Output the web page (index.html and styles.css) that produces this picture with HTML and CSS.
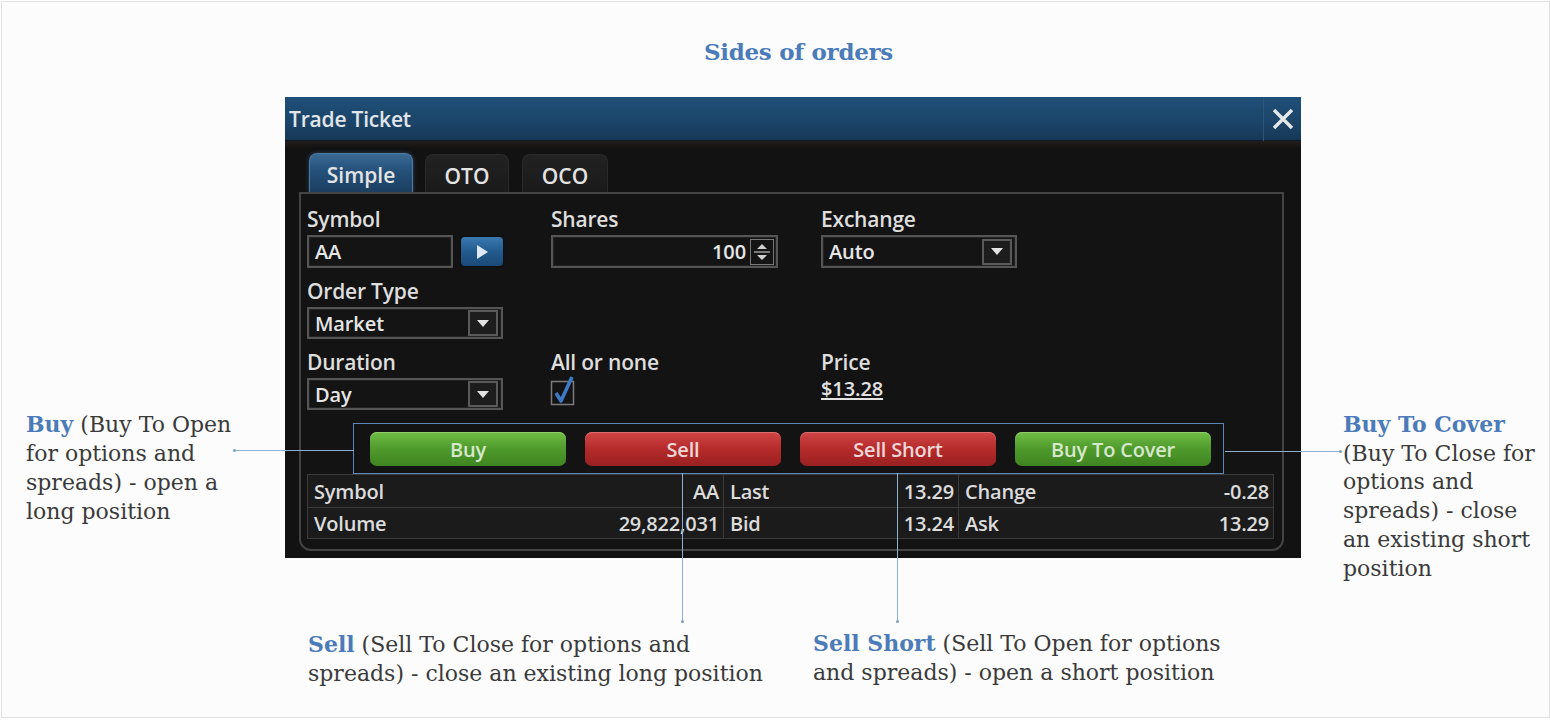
FILE: index.html
```html
<!DOCTYPE html>
<html>
<head>
<meta charset="utf-8">
<link rel="stylesheet" href="styles.css">
</head>
<body>
<div class="canvas">
  <h1 class="heading">Sides of orders</h1>

  <div class="window">
    <div class="titlebar">
      <span class="title">Trade Ticket</span>
      <div class="close">
        <svg width="24" height="24" viewBox="0 0 24 24"><path d="M3 3 L21 21 M21 3 L3 21" stroke="#e6e6e6" stroke-width="3.4" fill="none"/></svg>
      </div>
    </div>
    <div class="strip"></div>
    <div class="tabs">
      <div class="tab active">Simple</div>
      <div class="tab t-oto">OTO</div>
      <div class="tab t-oco">OCO</div>
    </div>
    <div class="panel">
      <div class="form">
        <div class="col c1">
          <div class="label">Symbol</div>
          <div class="ctrl-row">
            <div class="input w-sym">AA</div>
            <div class="go"><svg width="14" height="16" viewBox="0 0 14 16"><path d="M2 1 L13 8 L2 15 Z" fill="#dfe9f5"/></svg></div>
          </div>
          <div class="label">Order Type</div>
          <div class="select w-sel"><span>Market</span><div class="dd"><svg width="14" height="9" viewBox="0 0 14 9"><path d="M1 1 L13 1 L7 8 Z" fill="#e4e4e4"/></svg></div></div>
          <div class="label">Duration</div>
          <div class="select w-sel"><span>Day</span><div class="dd"><svg width="14" height="9" viewBox="0 0 14 9"><path d="M1 1 L13 1 L7 8 Z" fill="#e4e4e4"/></svg></div></div>
        </div>
        <div class="col c2">
          <div class="label">Shares</div>
          <div class="input w-shares num"><span>100</span>
            <div class="spin"><svg width="20" height="22" viewBox="0 0 20 22"><path d="M10 3 L15 8 L5 8 Z M10 19 L15 14 L5 14 Z" fill="#cfcfcf"/><path d="M2 11 L18 11" stroke="#bdbdbd" stroke-width="1.2"/></svg></div>
          </div>
          <div class="spacer"></div>
          <div class="label tight">All or none</div>
          <div class="check"><svg width="30" height="34" viewBox="0 0 30 34"><rect x="1.5" y="7.5" width="22" height="23" fill="none" stroke="#7b7b7b" stroke-width="1.5"/><path d="M6 19 L11 27 L22 3" stroke="#3d79c4" stroke-width="3.6" fill="none" stroke-linejoin="round"/></svg></div>
        </div>
        <div class="col c3">
          <div class="label">Exchange</div>
          <div class="select w-ex"><span>Auto</span><div class="dd"><svg width="14" height="9" viewBox="0 0 14 9"><path d="M1 1 L13 1 L7 8 Z" fill="#e4e4e4"/></svg></div></div>
          <div class="spacer"></div>
          <div class="label tight">Price</div>
          <div class="price">$13.28</div>
        </div>
      </div>

      <div class="actions">
        <div class="btn green">Buy</div>
        <div class="btn red">Sell</div>
        <div class="btn red">Sell Short</div>
        <div class="btn green">Buy To Cover</div>
      </div>

      <div class="quote">
        <div class="qrow">
          <div class="pair p1"><span>Symbol</span><span>AA</span></div>
          <div class="pair p2"><span>Last</span><span>13.29</span></div>
          <div class="pair p3"><span>Change</span><span>-0.28</span></div>
        </div>
        <div class="qrow">
          <div class="pair p1"><span>Volume</span><span>29,822,031</span></div>
          <div class="pair p2"><span>Bid</span><span>13.24</span></div>
          <div class="pair p3"><span>Ask</span><span>13.29</span></div>
        </div>
      </div>
    </div>
  </div>

  <div class="line h-left"><i class="dot dl"></i></div>
  <div class="line h-right"><i class="dot dr"></i></div>
  <div class="line v-sell"><i class="dot db"></i></div>
  <div class="line v-short"><i class="dot db"></i></div>

  <p class="note n-buy"><b>Buy</b> (Buy To Open<br>for options and<br>spreads) - open a<br>long position</p>
  <p class="note n-cover"><b>Buy To Cover</b><br>(Buy To Close for<br>options and<br>spreads) - close<br>an existing short<br>position</p>
  <p class="note n-sell"><b>Sell</b> (Sell To Close for options and<br>spreads) - close an existing long position</p>
  <p class="note n-short"><b>Sell Short</b> (Sell To Open for options<br>and spreads) - open a short position</p>
</div>
</body>
</html>
```
FILE: styles.css
```css
* { box-sizing: border-box; }
html, body { margin: 0; padding: 0; background: #ffffff; }
.canvas {
  position: relative;
  width: 1549px;
  height: 717px;
  margin: 1px 0 0 1px;
  border: 1px solid #e2e2e2;
  background: #fcfcfc;
  overflow: hidden;
}
.heading {
  margin: 0;
  padding: 35px 0 0 46px;
  height: 65px;
  line-height: 30px;
  text-align: center;
  font-family: "DejaVu Serif", serif;
  font-weight: bold;
  font-size: 23px;
  color: #4b7bb8;
  letter-spacing: -0.3px;
}
.window {
  margin: 30px 0 0 283px;
  width: 1016px;
  height: 461px;
  background: #121212;
  display: flex;
  flex-direction: column;
  font-family: "Open Sans", "Noto Sans", sans-serif;
  color: #dcdcdc;
}
.titlebar {
  height: 44px;
  display: flex;
  align-items: center;
  background: linear-gradient(#1f4f78, #1b4468 60%, #163857);
  border-bottom: 1px solid #0c1b29;
}
.title {
  flex: 1;
  padding-left: 4px;
  font-size: 21px;
  font-weight: 600;
  color: #e2e6ea;
  letter-spacing: -0.2px;
}
.close {
  width: 38px;
  height: 44px;
  border-left: 1px solid #2e5576;
  display: flex;
  align-items: center;
  justify-content: center;
}
.strip { height: 6px; background: linear-gradient(#241d1b, #161414); }
.tabs {
  margin-top: 6px;
  padding-left: 24px;
  display: flex;
  height: 39px;
  align-items: flex-end;
}
.tab {
  height: 38px;
  width: 84px;
  margin-right: 13px;
  border-radius: 8px 8px 0 0;
  background: linear-gradient(#222, #1a1a1a);
  border: 1px solid #2a2a2a;
  border-bottom: none;
  font-size: 21px;
  font-weight: 600;
  color: #e4e4e4;
  display: flex;
  align-items: center;
  justify-content: center;
  padding-top: 4px;
  letter-spacing: 0;
}
.tab.active {
  width: 104px;
  height: 39px;
  margin-right: 12px;
  background: linear-gradient(#3a6a94, #24507a 45%, #1c3f60);
  border: 1px solid #4d7aa3;
  border-bottom: none;
  box-shadow: 0 0 4px rgba(70,120,170,0.5);
}
.tab.t-oco { width: 86px; }
.panel {
  margin: 0 17px 7px 14px;
  flex: 1;
  border: 2px solid #444;
  border-radius: 0 0 12px 12px;
  padding: 13px 8px 0 6px;
  background: #131313;
}
.form { display: flex; }
.col { display: flex; flex-direction: column; align-items: flex-start; }
.c1 { width: 244px; }
.c2 { width: 270px; }
.c3 { flex: 1; }
.label {
  height: 24px;
  line-height: 24px;
  font-size: 21px;
  font-weight: 600;
  color: #dedede;
  letter-spacing: -0.2px;
  margin-bottom: 4px;
  white-space: nowrap;
}
.label.tight { margin-bottom: 0; }
.ctrl-row { display: flex; align-items: center; gap: 8px; margin-bottom: 11px; }
.input, .select {
  height: 33px;
  border: 2px solid #555;
  background: #141414;
  box-shadow: inset 0 0 0 1px #222;
  font-size: 20px;
  font-weight: 600;
  color: #e6e6e6;
  display: flex;
  align-items: center;
  padding-left: 6px;
  letter-spacing: -0.1px;
}
.w-sym { width: 146px; }
.go {
  width: 42px;
  height: 29px;
  border-radius: 4px;
  background: linear-gradient(#3a79b0, #22588c 55%, #1b4a78);
  display: flex;
  align-items: center;
  justify-content: center;
  box-shadow: 0 0 2px #000;
}
.w-shares { width: 227px; justify-content: flex-end; padding: 0 2px 0 6px; margin-bottom: 11px; }
.num span { margin-right: 4px; }
.spin {
  width: 24px;
  height: 26px;
  border: 1px solid #777;
  display: flex;
  align-items: center;
  justify-content: center;
}
.select { justify-content: space-between; padding-right: 3px; margin-bottom: 11px; }
.w-sel { width: 196px; height: 32px; }
.w-ex { width: 196px; }
.dd {
  width: 30px;
  height: 26px;
  border: 2px solid #5a5a5a;
  background: #1d1d1d;
  display: flex;
  align-items: center;
  justify-content: center;
}
.spacer { height: 71px; }
.check { height: 36px; margin-left: -1px; }
.price {
  font-size: 20px;
  font-weight: 600;
  color: #e2e2e2;
  text-decoration: underline;
  text-underline-offset: 2px;
  letter-spacing: -0.1px;
  height: 36px;
  line-height: 30px;
}
.actions {
  margin: 2px 0 0 46px;
  width: 871px;
  height: 51px;
  border: 1px solid #5a86b8;
  display: flex;
  justify-content: space-between;
  align-items: flex-start;
  padding: 8px 12px 0 16px;
}
.btn {
  width: 196px;
  height: 34px;
  border-radius: 7px;
  font-size: 20px;
  font-weight: 600;
  display: flex;
  align-items: center;
  justify-content: center;
  letter-spacing: -0.2px;
}
.green {
  background: linear-gradient(#6fbd45, #4f9a2c 50%, #3f8421);
  color: #d6e8cc;
  box-shadow: inset 0 1px 0 #8fd066;
}
.red {
  background: linear-gradient(#d04646, #b52b2b 50%, #9a2020);
  color: #f0d6d6;
  box-shadow: inset 0 1px 0 #e06a6a;
}
.quote {
  width: 967px;
  border: 1px solid #3b3b3b;
  background: #1b1b1b;
}
.qrow { display: flex; height: 32px; }
.qrow + .qrow { border-top: 1px solid #3a3a3a; height: 31px; }
.pair {
  display: flex;
  justify-content: space-between;
  align-items: center;
  padding: 0 4px 0 6px;
  font-size: 20px;
  font-weight: 600;
  color: #dcdcdc;
  letter-spacing: -0.2px;
}
.p1 { width: 416px; border-right: 1px solid #3a3a3a; }
.p2 { width: 235px; border-right: 1px solid #3a3a3a; }
.p3 { flex: 1; }

.line { position: absolute; background: #8fb0d2; }
.h-left { left: 232px; top: 448px; width: 120px; height: 1px; }
.h-right { left: 1223px; top: 449px; width: 116px; height: 1px; }
.v-sell { left: 680px; top: 471px; width: 1px; height: 149px; }
.v-short { left: 895px; top: 471px; width: 1px; height: 149px; }
.dot { position: absolute; width: 3px; height: 3px; border-radius: 50%; background: #7f9fc2; }
.dl { left: -1px; top: -1px; }
.dr { right: -1px; top: -1px; }
.db { left: -1px; bottom: -1px; }

.note {
  position: absolute;
  margin: 0;
  font-family: "DejaVu Serif", serif;
  font-size: 22px;
  line-height: 29px;
  color: #3a3a3a;
  letter-spacing: 0;
  white-space: nowrap;
}
.note b { color: #4b7bb8; }
.n-buy { left: 24px; top: 408px; }
.n-cover { left: 1341px; top: 408px; line-height: 28.7px; }
.n-sell { left: 306px; top: 628px; }
.n-short { left: 811px; top: 627px; }
```
